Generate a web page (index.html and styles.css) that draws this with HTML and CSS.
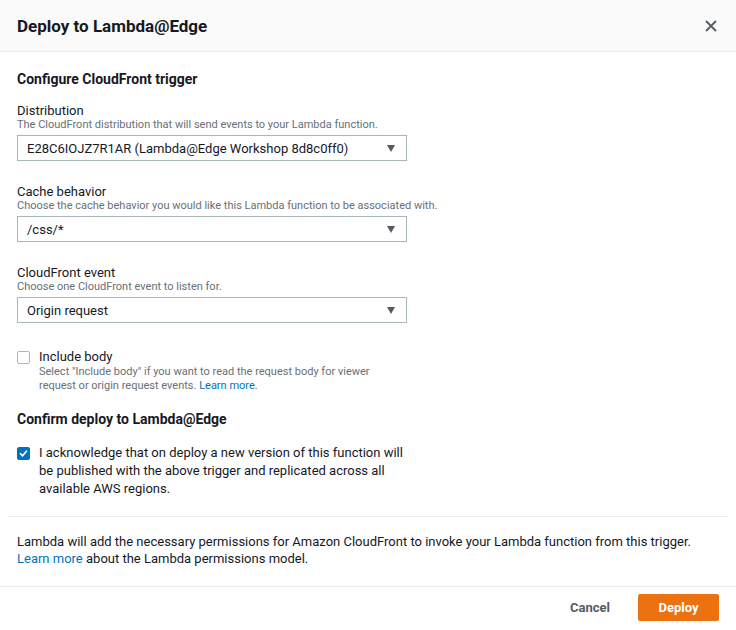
FILE: index.html
```html
<!DOCTYPE html>
<html>
<head>
<meta charset="utf-8">
<link rel="stylesheet" href="styles.css">
</head>
<body>
<div class="modal">
  <div class="modal-header">
    <h1 class="modal-title">Deploy to Lambda@Edge</h1>
    <button class="close-btn" aria-label="Close">
      <svg width="12" height="12" viewBox="0 0 12 12"><path d="M1 1L11 11M11 1L1 11" stroke="#545b64" stroke-width="1.8" fill="none"/></svg>
    </button>
  </div>
  <div class="modal-body">
    <h2 class="section-title">Configure CloudFront trigger</h2>

    <div class="field">
      <div class="label">Distribution</div>
      <div class="desc">The CloudFront distribution that will send events to your Lambda function.</div>
      <div class="select"><span>E28C6IOJZ7R1AR (Lambda@Edge Workshop 8d8c0ff0)</span><i class="caret"></i></div>
    </div>

    <div class="field">
      <div class="label">Cache behavior</div>
      <div class="desc">Choose the cache behavior you would like this Lambda function to be associated with.</div>
      <div class="select"><span>/css/*</span><i class="caret"></i></div>
    </div>

    <div class="field">
      <div class="label">CloudFront event</div>
      <div class="desc">Choose one CloudFront event to listen for.</div>
      <div class="select"><span>Origin request</span><i class="caret"></i></div>
    </div>

    <div class="check-row include">
      <span class="checkbox"></span>
      <div class="check-text">
        <div class="check-label">Include body</div>
        <div class="desc small"><span class="dline">Select "Include body" if you want to read the request body for viewer</span><span class="dline">request or origin request events. <a class="link" href="#">Learn more</a>.</span></div>
      </div>
    </div>

    <h2 class="section-title confirm">Confirm deploy to Lambda@Edge</h2>

    <div class="check-row ack">
      <span class="checkbox checked">
        <svg width="13" height="13" viewBox="0 0 13 13"><path d="M3 6.8L5.4 9.2L10 3.8" stroke="#fff" stroke-width="2" fill="none" stroke-linecap="round" stroke-linejoin="round"/></svg>
      </span>
      <div class="ack-text">I acknowledge that on deploy a new version of this function will be published with the above trigger and replicated across all available AWS regions.</div>
    </div>
  </div>
  <hr class="divider inset">
  <p class="note">Lambda will add the necessary permissions for Amazon CloudFront to invoke your Lambda function from this trigger. <a class="link" href="#">Learn more</a> about the Lambda permissions model.</p>
  <hr class="divider">
  <div class="modal-footer">
    <button class="btn-cancel">Cancel</button>
    <button class="btn-primary">Deploy</button>
  </div>
</div>
</body>
</html>
```

FILE: styles.css
```css
* { box-sizing: border-box; }
html, body { margin: 0; padding: 0; background: #fff; }
body {
  font-family: Roboto, "Open Sans", "DejaVu Sans", sans-serif;
  color: #16191f;
  font-size: 13px;
}
.modal { width: 736px; height: 630px; overflow: hidden; }
.modal-header {
  height: 52px;
  background: #fafafa;
  border-bottom: 1px solid #eaeded;
  display: flex;
  align-items: center;
  justify-content: space-between;
  padding: 0 18px 0 17px;
}
.modal-title { margin: 0; font-size: 17px; font-weight: 700; line-height: 20px; }
.close-btn { background: none; border: 0; padding: 0; width: 14px; height: 14px; display: flex; align-items: center; justify-content: center; }
.modal-body { padding: 17px 17px 0; }
.section-title { margin: 0; font-size: 14px; font-weight: 700; line-height: 20px; }
.section-title.confirm { margin-top: 16px; }
.field { width: 390px; margin-top: 11px; }
.field + .field { margin-top: 20px; }
.label { font-size: 13px; line-height: 16px; padding-top: 3px; }
.desc { font-size: 11px; line-height: 13px; color: #687078; white-space: nowrap; margin-top: -1px; }
.select {
  margin-top: 4px;
  height: 26px;
  border: 1px solid #aab7b8;
  display: flex;
  align-items: center;
  justify-content: space-between;
  padding: 0 11px 0 9px;
  font-size: 13px;
}
.caret {
  width: 0; height: 0;
  border-left: 4.5px solid transparent;
  border-right: 4.5px solid transparent;
  border-top: 7px solid #545b64;
}
.check-row { display: flex; align-items: flex-start; gap: 9px; }
.include { margin-top: 25px; }
.checkbox {
  flex: none;
  width: 13px; height: 13px;
  border: 1px solid #aab7b8;
  border-radius: 2px;
  margin-top: 3px;
  display: flex; align-items: center; justify-content: center;
}
.checkbox.checked { background: #0073bb; border-color: #0073bb; }
.checkbox.checked svg { display: block; }
.check-label { font-size: 13px; line-height: 18px; }
.desc.small { line-height: 14px; margin-top: -1px; }
.dline { display: block; }
.link { color: #0073bb; text-decoration: none; }
.ack { margin-top: 15px; }
.ack .checkbox { margin-top: 3px; }
.ack-text { width: 370px; font-size: 13px; line-height: 18px; }
.divider { border: 0; border-top: 1px solid #eaeded; margin: 0; }
.divider.inset { margin: 18px 8px 0; }
.note { margin: 16px 17px 19px; font-size: 13px; line-height: 17px; }
.modal-footer { display: flex; justify-content: flex-end; align-items: center; padding: 7px 17px 0; gap: 28px; }
.btn-cancel { background: none; border: 0; padding: 0; font-family: inherit; font-size: 13px; font-weight: 700; color: #545b64; }
.btn-primary {
  width: 81px; height: 27px;
  background: #ec7211; border: 0; border-radius: 2px;
  color: #fff; font-family: inherit; font-size: 13px; font-weight: 700;
}
```
